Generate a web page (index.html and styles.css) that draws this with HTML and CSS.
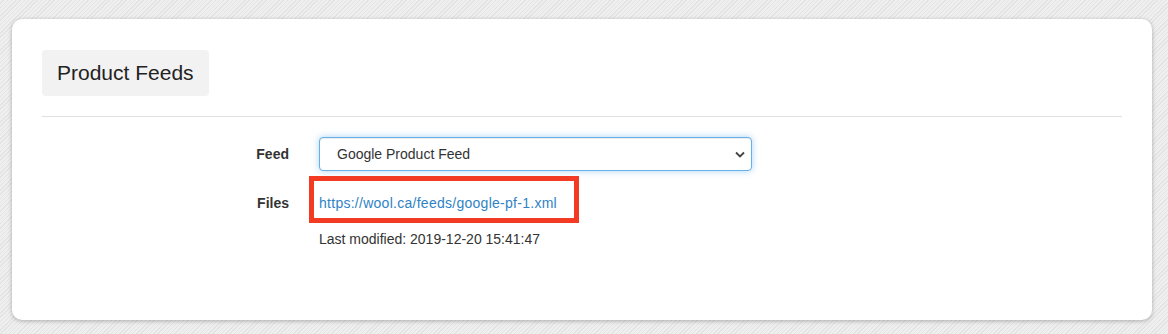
FILE: index.html
```html
<!DOCTYPE html>
<html lang="en">
<head>
  <meta charset="UTF-8" />
  <title>Product Feeds</title>
  <link rel="stylesheet" href="styles.css">
</head>
<body>
  <div class="panel">
    <h2 class="panel-title">Product Feeds</h2>
    <hr class="divider" />

    <form class="feed-form">
      <label class="form-label" for="feed">Feed</label>
      <div class="field">
        <select id="feed" class="feed-select">
          <option>Google Product Feed</option>
        </select>
      </div>

      <div class="form-label">Files</div>
      <div class="field files">
        <span class="file-link">
          <a href="#">https://wool.ca/feeds/google-pf-1.xml</a>
          <span class="highlight"></span>
        </span>
        <p class="modified">Last modified: 2019-12-20 15:41:47</p>
      </div>
    </form>
  </div>
</body>
</html>
```

FILE: styles.css
```css
body {
  margin: 0;
  padding: 19px 16px 14px 12px;
  font-family: "Liberation Sans", Arial, sans-serif;
  font-size: 14px;
  color: #333;
  background-color: #ebebeb;
  background-image: repeating-linear-gradient(-45deg, #e3e3e3 0, #e3e3e3 1px, #efefef 1px, #efefef 3px);
}

.panel {
  background: #fff;
  border-radius: 10px;
  box-shadow: 0 1px 4px rgba(0, 0, 0, 0.28);
  padding: 31px 30px 71px 30px;
}

.panel-title {
  display: inline-block;
  margin: 0;
  padding: 10px 15px;
  font-size: 21px;
  line-height: 26px;
  font-weight: normal;
  color: #222;
  background: #f2f2f2;
  border-radius: 4px;
}

.divider {
  border: 0;
  border-top: 1px solid #e0e0e0;
  margin: 20px 0;
}

/* form grid */
.feed-form {
  display: grid;
  grid-template-columns: 247px 433px;
  column-gap: 30px;
  row-gap: 15px;
}

.form-label {
  text-align: right;
  font-weight: bold;
  padding-top: 7px;
  line-height: 20px;
  color: #333;
}

.feed-select {
  -webkit-appearance: none;
  appearance: none;
  width: 100%;
  height: 34px;
  margin: 0;
  padding: 0 30px 0 17px;
  font-family: "Liberation Sans", Arial, sans-serif;
  font-size: 14px;
  color: #333;
  background: #fff url("data:image/svg+xml,%3Csvg xmlns='http://www.w3.org/2000/svg' width='10' height='7' viewBox='0 0 10 7'%3E%3Cpath d='M1 1.5l4 4 4-4' fill='none' stroke='%23444' stroke-width='1.8'/%3E%3C/svg%3E") no-repeat right 6px center;
  border: 1px solid #66afe9;
  border-radius: 4px;
  box-shadow: inset 0 1px 1px rgba(0, 0, 0, 0.075), 0 0 7px rgba(102, 175, 233, 0.55);
  outline: none;
}

.files {
  padding-top: 7px;
  line-height: 20px;
}

.file-link {
  position: relative;
  display: inline-block;
}

.file-link a {
  color: #2f83c5;
  letter-spacing: 0.27px;
  text-decoration: none;
}

/* red annotation box */
.highlight {
  position: absolute;
  top: -17px;
  left: -10px;
  right: -22px;
  bottom: -10px;
  border: 5px solid #f33a23;
}

.modified {
  margin: 16px 0 0;
  font-size: 14px;
  color: #333;
}
```
